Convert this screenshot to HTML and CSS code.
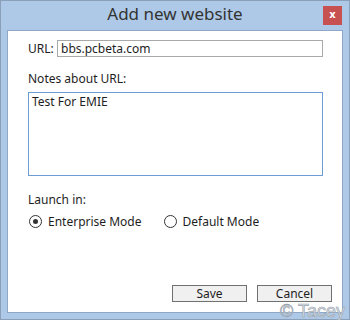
FILE: index.html
```html
<!DOCTYPE html>
<html>
<head>
    <meta charset="utf-8">
    <link rel="stylesheet" href="styles.css">
</head>
<body>
    <div class="window">
        <div class="titlebar">
            <span class="title">Add new website</span>
            <span class="close-btn">x</span>
        </div>

        <div class="content">
            <div class="url-row">
                <label class="label">URL:</label>
                <div class="text-input">bbs.pcbeta.com</div>
            </div>

            <div class="label notes-label">Notes about URL:</div>
            <div class="notes-box">Test For EMIE</div>

            <div class="label launch-label">Launch in:</div>
            <div class="radio-row">
                <span class="radio checked"></span>
                <span class="radio-text">Enterprise Mode</span>
                <span class="radio"></span>
                <span class="radio-text">Default Mode</span>
            </div>

            <div class="form-buttons">
                <button class="btn">Save</button>
                <button class="btn">Cancel</button>
            </div>
        </div>

        <div class="watermark">© Tacey</div>
    </div>
</body>
</html>
```

FILE: styles.css
```css
body {
    margin: 0;
    font-family: "Noto Sans", "Open Sans", sans-serif;
    font-size: 12px;
    color: #1e1e1e;
}

.window {
    position: relative;
    width: 350px;
    height: 320px;
    box-sizing: border-box;
    border: 1px solid #8a9fb8;
    background: #adc9e7;
    padding: 0 6px 6px 6px;
    display: flex;
    flex-direction: column;
}

.titlebar {
    height: 29px;
    display: flex;
    align-items: center;
    justify-content: center;
    position: relative;
}

.title {
    font-size: 17px;
    color: #333;
    margin-top: -4px;
}

.close-btn {
    position: absolute;
    right: 1px;
    top: 5px;
    width: 19px;
    height: 19px;
    background: #c75050;
    color: #fff;
    font-family: "DejaVu Sans", sans-serif;
    font-weight: bold;
    font-size: 10px;
    line-height: 17px;
    text-align: center;
}

.content {
    flex: 1;
    background: #fff;
    border: 1px solid #8fa8c8;
    padding: 9px 19px 10px 20px;
    display: flex;
    flex-direction: column;
}

.url-row {
    display: flex;
    align-items: center;
}

.label {
    line-height: 16px;
}

.url-row .label {
    width: 29px;
}

.text-input {
    flex: 1;
    height: 15px;
    border: 1px solid #a9a9a9;
    padding: 0 3px;
    line-height: 15px;
}

.notes-label {
    margin-top: 14px;
}

.notes-box {
    height: 80px;
    border: 1px solid #6d9cd2;
    margin-top: 5px;
    padding: 1px 3px;
    line-height: 16px;
}

.launch-label {
    margin-top: 16px;
}

.radio-row {
    display: flex;
    align-items: center;
    margin-top: 5px;
}

.radio {
    width: 11px;
    height: 11px;
    border: 1px solid #333;
    border-radius: 50%;
    box-sizing: content-box;
    position: relative;
    margin-left: 1px;
    margin-right: 6px;
}

.radio.checked::after {
    content: "";
    position: absolute;
    left: 3px;
    top: 3px;
    width: 5px;
    height: 5px;
    border-radius: 50%;
    background: #333;
}

.radio-text {
    margin-right: 21px;
}

.form-buttons {
    margin-top: auto;
    display: flex;
    justify-content: flex-end;
    gap: 10px;
    margin-right: -9px;
}

.btn {
    width: 75px;
    height: 17px;
    padding: 0;
    border: 1px solid #707070;
    background: #f0f0f0;
    font-family: inherit;
    font-size: 12px;
    line-height: 14px;
    color: #1e1e1e;
}

.watermark {
    position: absolute;
    right: 4px;
    bottom: 0;
    font-family: "Liberation Sans", sans-serif;
    font-size: 18px;
    line-height: 16px;
    color: #d8dde4;
    -webkit-text-stroke: 0.6px #9aa3ad;
}
```
